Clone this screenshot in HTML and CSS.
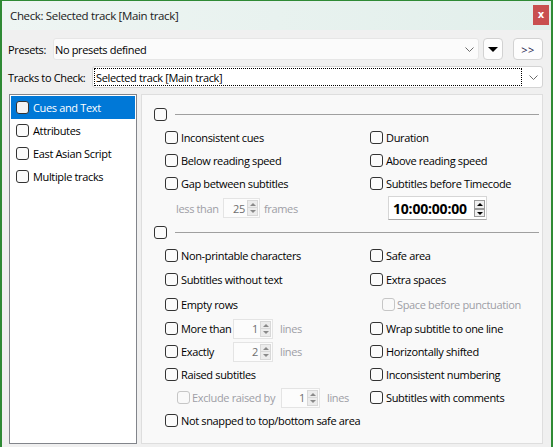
FILE: index.html
```html
<!DOCTYPE html>
<html>
<head>
<meta charset="utf-8">
<title>Check</title>
<link rel="stylesheet" href="styles.css">
</head>
<body>
<div class="window">
  <div class="titlebar">
    <span class="title">Check: Selected track [Main track]</span>
    <span class="close">x</span>
  </div>
  <div class="content">
    <div class="row">
      <span class="label lab-presets">Presets:</span>
      <div class="combo combo-presets">
        <span class="combo-text">No presets defined</span>
        <svg class="chev" width="9" height="5" viewBox="0 0 9 5"><path d="M0.5 0.5 L4.5 4.5 L8.5 0.5" fill="none" stroke="#6a6a6a" stroke-width="1"/></svg>
      </div>
      <div class="btn btn-drop"><svg width="10" height="5" viewBox="0 0 10 5"><path d="M0 0 H10 L5 5 Z" fill="#000"/></svg></div>
      <div class="btn btn-more">&gt;&gt;</div>
    </div>
    <div class="row row-tracks">
      <span class="label lab-tracks">Tracks to Check:</span>
      <div class="combo combo-tracks">
        <span class="focus">Selected track [Main track]</span>
        <svg class="chev" width="9" height="5" viewBox="0 0 9 5"><path d="M0.5 0.5 L4.5 4.5 L8.5 0.5" fill="none" stroke="#6a6a6a" stroke-width="1"/></svg>
      </div>
    </div>
    <div class="main">
      <div class="list">
        <div class="item sel"><span class="cb"></span><span>Cues and Text</span></div>
        <div class="item"><span class="cb"></span><span>Attributes</span></div>
        <div class="item"><span class="cb"></span><span>East Asian Script</span></div>
        <div class="item"><span class="cb"></span><span>Multiple tracks</span></div>
      </div>
      <div class="panel">
        <div class="ghead"><span class="cb"></span><span class="line"></span></div>
        <div class="grid g1">
          <div class="cell"><span class="cb"></span><span>Inconsistent cues</span></div>
          <div class="cell"><span class="cb"></span><span>Duration</span></div>
          <div class="cell"><span class="cb"></span><span>Below reading speed</span></div>
          <div class="cell"><span class="cb"></span><span>Above reading speed</span></div>
          <div class="cell"><span class="cb"></span><span>Gap between subtitles</span></div>
          <div class="cell"><span class="cb"></span><span>Subtitles before Timecode</span></div>
          <div class="cell ind-less">
            <span class="dis less-lab">less than</span>
            <span class="spin spin-25"><span class="val">25</span><span class="arrows"><i class="up"></i><i class="dn"></i></span></span>
            <span class="dis after">frames</span>
          </div>
          <div class="cell ind-tc">
            <span class="tc"><span class="tc-val">10:00:00:00</span><span class="arrows tc-arrows"><i class="up"></i><i class="dn"></i></span></span>
          </div>
        </div>
        <div class="ghead g2head"><span class="cb"></span><span class="line"></span></div>
        <div class="grid g2">
          <div class="cell"><span class="cb"></span><span>Non-printable characters</span></div>
          <div class="cell"><span class="cb"></span><span>Safe area</span></div>
          <div class="cell"><span class="cb"></span><span>Subtitles without text</span></div>
          <div class="cell"><span class="cb"></span><span>Extra spaces</span></div>
          <div class="cell"><span class="cb"></span><span>Empty rows</span></div>
          <div class="cell ind-sub"><span class="cb cb-dis"></span><span class="dis sub-text">Space before punctuation</span></div>
          <div class="cell">
            <span class="cb"></span><span class="num-lab">More than</span>
            <span class="spin spin-n"><span class="val">1</span><span class="arrows"><i class="up"></i><i class="dn"></i></span></span>
            <span class="dis after">lines</span>
          </div>
          <div class="cell"><span class="cb"></span><span>Wrap subtitle to one line</span></div>
          <div class="cell">
            <span class="cb"></span><span class="num-lab">Exactly</span>
            <span class="spin spin-n"><span class="val">2</span><span class="arrows"><i class="up"></i><i class="dn"></i></span></span>
            <span class="dis after">lines</span>
          </div>
          <div class="cell"><span class="cb"></span><span>Horizontally shifted</span></div>
          <div class="cell"><span class="cb"></span><span>Raised subtitles</span></div>
          <div class="cell"><span class="cb"></span><span>Inconsistent numbering</span></div>
          <div class="cell ind-sub">
            <span class="cb cb-dis"></span><span class="dis excl-lab">Exclude raised by</span>
            <span class="spin spin-x"><span class="val">1</span><span class="arrows"><i class="up"></i><i class="dn"></i></span></span>
            <span class="dis after">lines</span>
          </div>
          <div class="cell"><span class="cb"></span><span>Subtitles with comments</span></div>
          <div class="cell span2"><span class="cb"></span><span>Not snapped to top/bottom safe area</span></div>
        </div>
      </div>
    </div>
  </div>
</div>
</body>
</html>
```
FILE: styles.css
```css
html, body {
  margin: 0;
  padding: 0;
}
body {
  width: 553px;
  height: 447px;
  overflow: hidden;
  background: #f0f0f0;
  font-family: "Open Sans", "Noto Sans", sans-serif;
  font-size: 11px;
  letter-spacing: -0.35px;
  color: #000;
}
.window {
  box-sizing: border-box;
  width: 553px;
  height: 447px;
  border-top: 1px solid #2f8a35;
  border-left: 2px solid #2f8a35;
  border-right: 2px solid #2f8a35;
  background: #f0f0f0;
  display: flex;
  flex-direction: column;
}
.titlebar {
  height: 29px;
  flex: none;
  display: flex;
  align-items: center;
  justify-content: space-between;
  background: linear-gradient(to right, #eef5f3, #e2efeb);
  padding: 0 2px 0 8px;
}
.title {
  font-size: 11.5px;
  color: #1a1a1a;
  white-space: nowrap;
  margin-top: 0;
}
.close {
  width: 16px;
  height: 20px;
  background: #c94f4f;
  color: #fff;
  font-family: "DejaVu Sans", sans-serif;
  font-weight: bold;
  font-size: 10px;
  letter-spacing: 0;
  display: flex;
  align-items: center;
  justify-content: center;
  margin-bottom: 2px;
}
.content {
  flex: 1;
  display: flex;
  flex-direction: column;
  padding: 8px 8px 0 6px;
  min-height: 0;
}
.row {
  display: flex;
  align-items: center;
  height: 22px;
  flex: none;
}
.row-tracks {
  margin-top: 6px;
}
.label {
  white-space: nowrap;
  flex: none;
}
.lab-presets { width: 45px; }
.lab-tracks { width: 84px; }
.combo {
  flex: 1;
  height: 22px;
  box-sizing: border-box;
  display: flex;
  align-items: center;
  border-radius: 3px;
  padding-right: 4px;
}
.combo-presets {
  background: #fbfbfb;
  border: 1px solid #e6e6e6;
  padding-left: 1px;
  margin-right: 4px;
}
.combo-text {
  flex: 1;
  white-space: nowrap;
}
.combo-tracks {
  background: #fff;
  border: 1px solid #d4d4d4;
  padding-left: 1px;
}
.focus {
  flex: 1;
  height: 18px;
  box-sizing: border-box;
  border: 1px dotted #000;
  display: flex;
  align-items: center;
  padding-left: 1px;
  margin-right: 7px;
  white-space: nowrap;
}
.chev {
  flex: none;
  display: block;
}
.btn {
  flex: none;
  height: 22px;
  box-sizing: border-box;
  background: #fdfdfd;
  border: 1px solid #d2d2d2;
  border-radius: 4px;
  display: flex;
  align-items: center;
  justify-content: center;
}
.btn-drop {
  width: 20px;
}
.btn-drop svg { display: block; margin-top: 1px; }
.btn-more {
  width: 30px;
  margin-left: 10px;
  color: #1b1b4a;
  letter-spacing: 0.5px;
  font-size: 11px;
}
.main {
  flex: 1;
  display: flex;
  gap: 4px;
  margin-top: 6px;
  margin-bottom: 3px;
  min-height: 0;
}
.list {
  width: 128px;
  margin-left: 1px;
  box-sizing: border-box;
  background: #fff;
  border: 1px solid #82858b;
  padding: 1px;
}
.item {
  height: 23px;
  display: flex;
  align-items: center;
  gap: 4px;
  padding-left: 5px;
  white-space: nowrap;
}
.item.sel {
  background: #0078d7;
  color: #fff;
}
.item.sel .cb {
  background: #f3f3f3;
}
.cb {
  flex: none;
  width: 13px;
  height: 13px;
  box-sizing: border-box;
  border: 1px solid #333;
  border-radius: 3px;
  background: #fbfbfb;
}
.cb-dis {
  border-color: #c6c6c6;
  background: #f9f9f9;
}
.panel {
  flex: 1;
  box-sizing: border-box;
  background: #f9f9f9;
  border: 1px solid #dedede;
  padding: 11px 3px 0 12px;
}
.ghead {
  height: 16px;
  display: flex;
  align-items: center;
}
.ghead .line {
  flex: 1;
  height: 1px;
  background: #a0a0a0;
  margin-left: 8px;
}
.g2head {
  margin-top: 3px;
}
.grid {
  display: grid;
  grid-template-columns: 205px 1fr;
  margin-left: 11px;
  margin-top: 4px;
}
.g1 {
  grid-template-rows: 23px 23px 23px 26px;
}
.g2 {
  grid-template-rows: 23px 25px 25px 23px 23px 23px 23px 23px;
}
.cell {
  display: flex;
  align-items: center;
  gap: 3px;
  white-space: nowrap;
}
.span2 {
  grid-column: 1 / 3;
}
.dis {
  color: #9e9ea6;
}
.ind-less {
  padding-left: 11px;
  gap: 0;
}
.less-lab {
  width: 47px;
}
.after {
  margin-left: 4px;
}
.ind-tc {
  padding-left: 18px;
}
.ind-sub {
  padding-left: 12px;
}
.sub-text {
  margin-left: -1px;
}
.num-lab {
  width: 52px;
}
.excl-lab {
  width: 89px;
  margin-left: -1px;
}
.spin {
  height: 20px;
  box-sizing: border-box;
  border: 1px solid #e4e4e4;
  background: #fcfcfc;
  display: flex;
  align-items: center;
  justify-content: flex-end;
  padding-right: 1px;
  gap: 2px;
  flex: none;
}
.spin-25 { width: 37px; }
.spin-n { width: 40px; margin-left: -3px; }
.spin-x { width: 39px; margin-left: -3px; }
.spin .after { margin-left: 0; }
.val {
  color: #6e6e6e;
}
.arrows {
  display: flex;
  flex-direction: column;
}
.arrows i {
  display: block;
  width: 11px;
  height: 8px;
  box-sizing: border-box;
  border: 1px solid #d8d8d8;
  background: #ececec;
  position: relative;
}
.arrows i.dn {
  margin-top: 0;
  border-top: none;
  height: 8px;
}
.arrows i::after {
  content: "";
  position: absolute;
  left: 2px;
  width: 0;
  height: 0;
  border-left: 3px solid transparent;
  border-right: 3px solid transparent;
}
.arrows i.up::after {
  top: 2px;
  border-bottom: 3px solid #8a8a8a;
}
.arrows i.dn::after {
  top: 2px;
  border-top: 3px solid #8a8a8a;
}
.tc {
  width: 99px;
  height: 24px;
  box-sizing: border-box;
  background: #fff;
  border: 1px solid #d6d6d6;
  border-bottom-color: #a8a8a8;
  display: flex;
  align-items: center;
  justify-content: space-between;
  padding: 0 1px 0 4px;
}
.tc-val {
  font-family: "Open Sans", sans-serif;
  font-weight: 700;
  font-size: 14px;
  letter-spacing: -0.2px;
}
.tc-arrows i {
  width: 11px;
  height: 9px;
  border-color: #9a9a9a;
  background: #f0f0f0;
}
.tc-arrows i.dn {
  border-top: 1px solid #9a9a9a;
}
.tc-arrows i.up::after {
  border-bottom-color: #000;
}
.tc-arrows i.dn::after {
  border-top-color: #000;
}
```
